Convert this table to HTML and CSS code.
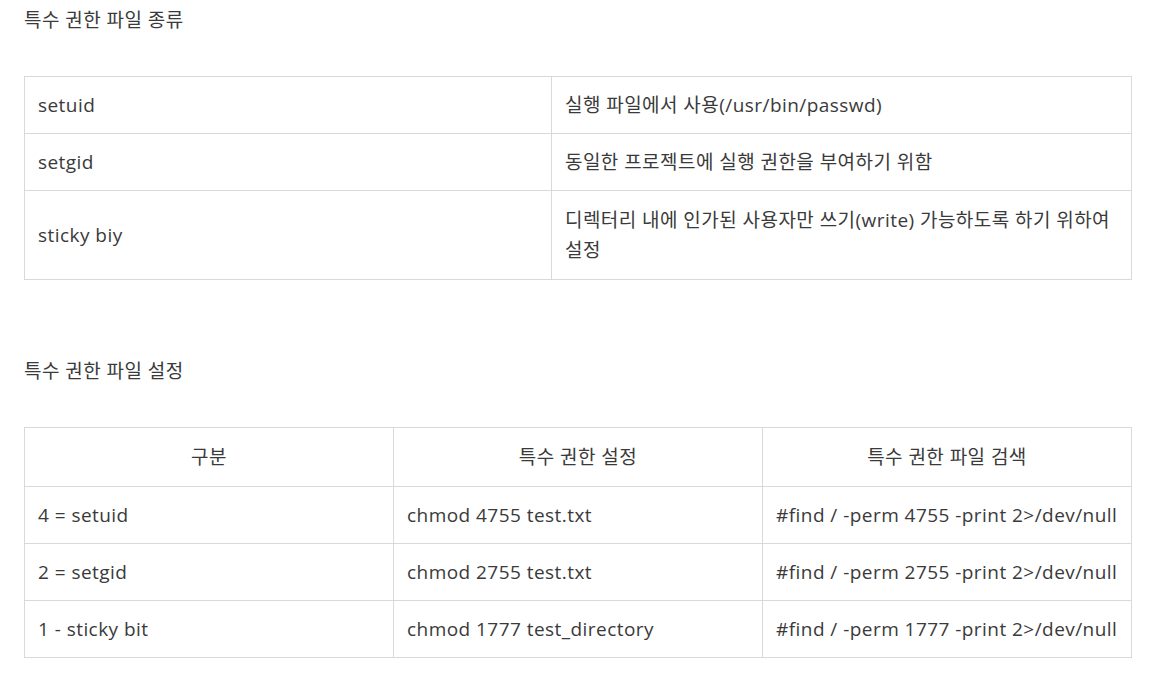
FILE: index.html
```html
<!DOCTYPE html>
<html lang="ko">
<head>
<meta charset="utf-8">
<link rel="stylesheet" href="styles.css">
</head>
<body>
<main class="content">
  <p class="heading">특수 권한 파일 종류</p>
  <table class="tbl kinds">
    <colgroup><col class="c-a"><col></colgroup>
    <tr><td>setuid</td><td>실행 파일에서 사용(/usr/bin/passwd)</td></tr>
    <tr><td>setgid</td><td>동일한 프로젝트에 실행 권한을 부여하기 위함</td></tr>
    <tr class="tall"><td>sticky biy</td><td>디렉터리 내에 인가된 사용자만 쓰기(write) 가능하도록 하기 위하여 설정</td></tr>
  </table>
  <p class="heading second">특수 권한 파일 설정</p>
  <table class="tbl setting">
    <colgroup><col class="c-1"><col class="c-2"><col></colgroup>
    <tr class="head"><td>구분</td><td>특수 권한 설정</td><td>특수 권한 파일 검색</td></tr>
    <tr><td>4 = setuid</td><td>chmod 4755 test.txt</td><td>#find / -perm 4755 -print 2&gt;/dev/null</td></tr>
    <tr><td>2 = setgid</td><td>chmod 2755 test.txt</td><td>#find / -perm 2755 -print 2&gt;/dev/null</td></tr>
    <tr><td>1 - sticky bit</td><td>chmod 1777 test_directory</td><td>#find / -perm 1777 -print 2&gt;/dev/null</td></tr>
  </table>
</main>
</body>
</html>
```
FILE: styles.css
```css
html, body {
  margin: 0;
  padding: 0;
  background: #fff;
}
body {
  font-family: "Open Sans", "Noto Sans CJK KR", sans-serif;
  font-weight: 400;
  color: #3a3a3a;
  font-size: 19px;
  letter-spacing: 0.45px;
  word-break: keep-all;
}
.content {
  width: 1108px;
  padding: 6px 0 0 24px;
}
.heading {
  margin: 0;
  line-height: 28px;
  font-size: 19px;
}
.heading.second {
  margin-top: 77px;
}
.tbl {
  width: 1108px;
  border-collapse: collapse;
  table-layout: fixed;
  margin-top: 42px;
  font-size: 19px;
}
.tbl td {
  border: 1px solid #d9d9d9;
  padding: 13px 13px;
  line-height: 30px;
  vertical-align: middle;
}
.kinds .tall td {
  padding-top: 14px;
  padding-bottom: 14px;
}
.kinds .c-a { width: 527px; }
.setting .c-1 { width: 369px; }
.setting .c-2 { width: 369px; }
.setting .head td {
  text-align: center;
  padding-top: 14px;
  padding-bottom: 14px;
}
```
